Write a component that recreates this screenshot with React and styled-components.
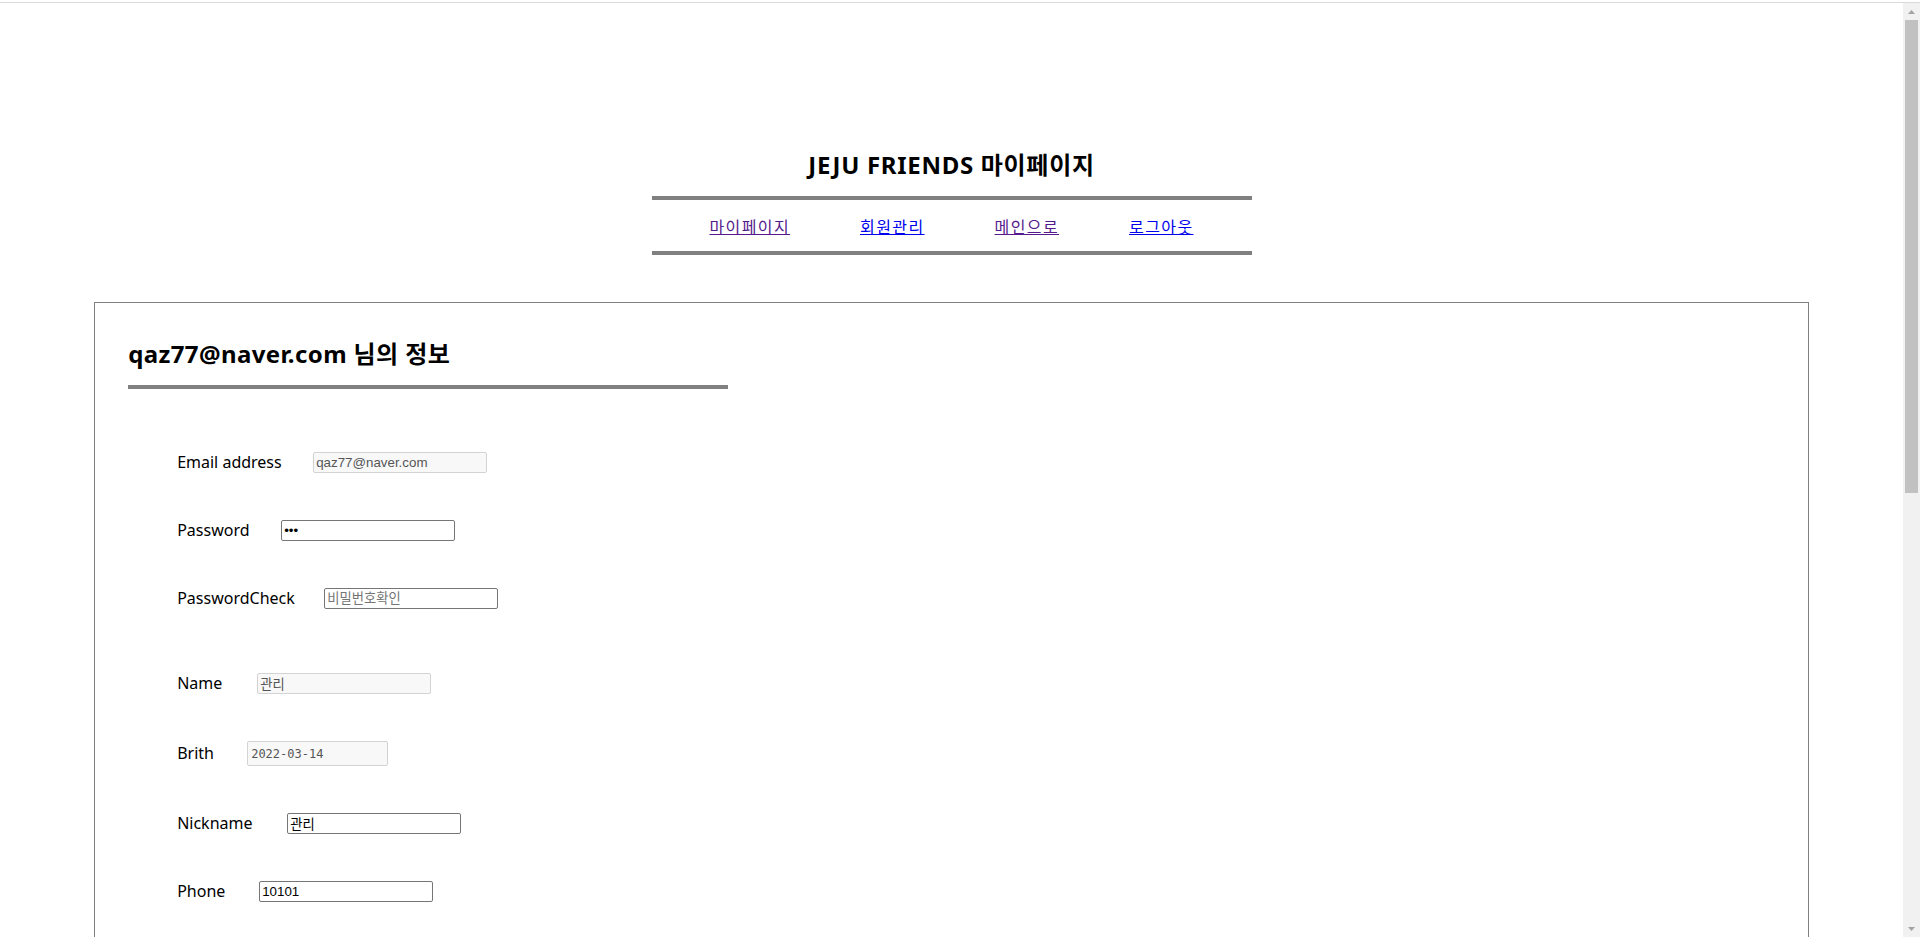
import React from "react";
import styled, { createGlobalStyle } from "styled-components";

const Global = createGlobalStyle`
  html, body {
    margin: 0;
    padding: 0;
    overflow: hidden;
    background: #ffffff;
  }
  body {
    font-family: "Noto Sans", "Noto Sans CJK KR", sans-serif;
    color: #000;
  }
`;

const Frame = styled.div`
  height: 100vh;
  display: flex;
  flex-direction: column;
`;

const TopStrip = styled.div`
  height: 2px;
  border-bottom: 1px solid #dadada;
  flex-shrink: 0;
`;

const Window = styled.div`
  flex: 1;
  display: flex;
  min-height: 0;
`;

const Viewport = styled.div`
  flex: 1;
  min-width: 0;
  overflow: hidden;
`;

const Scrollbar = styled.div`
  width: 17px;
  flex-shrink: 0;
  background: #f1f1f1;
  display: flex;
  flex-direction: column;
  align-items: center;
`;

const ArrowButton = styled.div`
  height: 17px;
  width: 17px;
  display: flex;
  align-items: center;
  justify-content: center;
`;

const Thumb = styled.div`
  width: 13px;
  height: 473px;
  background: #c1c1c1;
`;

const Spacer = styled.div`
  flex: 1;
`;

const Header = styled.header`
  width: 600px;
  margin: 0 auto;
  padding-top: 146px;
`;

const Title = styled.h1`
  margin: 0;
  font-size: 24px;
  line-height: 32px;
  font-weight: 700;
  text-align: center;
  letter-spacing: 0.7px;
`;

const Nav = styled.nav`
  margin-top: 15px;
  height: 51px;
  border-top: 4px solid #808080;
  border-bottom: 4px solid #808080;
  display: flex;
  justify-content: center;
  align-items: center;
`;

const NavLink = styled.a`
  margin: 0 35px;
  font-size: 16px;
  line-height: 20px;
  letter-spacing: 1.4px;
  color: ${(p) => (p.$visited ? "#551a8b" : "#0000ee")};
  text-decoration: underline;
  font-family: "Noto Sans CJK KR", sans-serif;
`;

const InfoBox = styled.section`
  width: 90%;
  margin: 47px auto 0;
  border: 1px solid #808080;
  padding-bottom: 600px;
`;

const InfoHead = styled.div`
  width: 600px;
  margin-left: 33px;
  padding-top: 35px;
  padding-bottom: 15px;
  border-bottom: 4px solid #808080;
`;

const InfoTitle = styled.h2`
  margin: 0;
  font-size: 24px;
  line-height: 32px;
  font-weight: 700;
  letter-spacing: 0.4px;
`;

const Form = styled.form`
  margin: 63px 0 0 82px;
  display: flex;
  flex-direction: column;
  gap: 47px;
`;

const Row = styled.div`
  display: flex;
  align-items: center;
  margin-top: ${(p) => p.$extra || 0}px;
`;

const Label = styled.label`
  width: ${(p) => p.$w}px;
  flex-shrink: 0;
  font-size: 16px;
  line-height: 21px;
`;

const Input = styled.input`
  box-sizing: border-box;
  width: 174px;
  height: 21px;
  padding: 1px 2px;
  margin: 0;
  border: 1px solid #767676;
  border-radius: 2px;
  background: #ffffff;
  color: #000;
  font-family: "Liberation Sans", "Noto Sans CJK KR", sans-serif;
  font-size: 13.33px;
  outline: none;

  &::placeholder {
    color: #757575;
  }

  &:disabled {
    background: #f8f8f8;
    border-color: #d3d3d3;
    color: #555;
  }
`;

const DateInput = styled(Input)`
  width: 141px;
  height: 25px;
  padding: 1px 3px;
  font-family: "DejaVu Sans Mono", "Liberation Mono", monospace;
  font-size: 12px;
`;

function UpArrow() {
  return (
    <svg width="7" height="4" viewBox="0 0 7 4">
      <path d="M3.5 0 L7 4 L0 4 Z" fill="#a3a3a3" />
    </svg>
  );
}

function DownArrow() {
  return (
    <svg width="7" height="4" viewBox="0 0 7 4">
      <path d="M0 0 L7 0 L3.5 4 Z" fill="#a3a3a3" />
    </svg>
  );
}

export default function App() {
  return (
    <>
      <Global />
      <Frame>
        <TopStrip />
        <Window>
          <Viewport>
            <Header>
              <Title>JEJU FRIENDS 마이페이지</Title>
              <Nav>
                <NavLink href="#" $visited>마이페이지</NavLink>
                <NavLink href="#">회원관리</NavLink>
                <NavLink href="#" $visited>메인으로</NavLink>
                <NavLink href="#">로그아웃</NavLink>
              </Nav>
            </Header>
            <InfoBox>
              <InfoHead>
                <InfoTitle>qaz77@naver.com 님의 정보</InfoTitle>
              </InfoHead>
              <Form onSubmit={(e) => e.preventDefault()}>
                <Row>
                  <Label $w={136}>Email address</Label>
                  <Input type="text" value="qaz77@naver.com" disabled readOnly />
                </Row>
                <Row>
                  <Label $w={104}>Password</Label>
                  <Input type="password" defaultValue="abc" />
                </Row>
                <Row>
                  <Label $w={147}>PasswordCheck</Label>
                  <Input type="password" placeholder="비밀번호확인" />
                </Row>
                <Row $extra={17}>
                  <Label $w={80}>Name</Label>
                  <Input type="text" value="관리" disabled readOnly />
                </Row>
                <Row>
                  <Label $w={70}>Brith</Label>
                  <DateInput type="text" value="2022-03-14" disabled readOnly />
                </Row>
                <Row>
                  <Label $w={110}>Nickname</Label>
                  <Input type="text" defaultValue="관리" />
                </Row>
                <Row>
                  <Label $w={82}>Phone</Label>
                  <Input type="text" defaultValue="10101" />
                </Row>
              </Form>
            </InfoBox>
          </Viewport>
          <Scrollbar>
            <ArrowButton>
              <UpArrow />
            </ArrowButton>
            <Thumb />
            <Spacer />
            <ArrowButton>
              <DownArrow />
            </ArrowButton>
          </Scrollbar>
        </Window>
      </Frame>
    </>
  );
}
